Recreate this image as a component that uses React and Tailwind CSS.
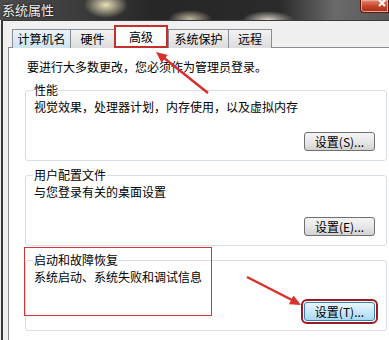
import React from "react";

const tabs = [
  { label: "计算机名", w: "w-[58px]", tone: "blue" },
  { label: "硬件", w: "w-[44px]" },
  { label: "高级", w: "w-[54px]", active: true },
  { label: "系统保护", w: "w-[60px]" },
  { label: "远程", w: "w-[44px]", last: true },
];

const groups = [
  {
    title: "性能",
    desc: "视觉效果，处理器计划，内存使用，以及虚拟内存",
    btn: "设置(S)...",
  },
  {
    title: "用户配置文件",
    desc: "与您登录有关的桌面设置",
    btn: "设置(E)...",
  },
  {
    title: "启动和故障恢复",
    desc: "系统启动、系统失败和调试信息",
    btn: "设置(T)...",
    focus: true,
  },
];

function TitleBar() {
  return (
    <div className="flex h-[20px] items-start bg-[radial-gradient(ellipse_22px_13px_at_106px_5px,#e9e2bb,transparent),radial-gradient(ellipse_22px_9px_at_190px_19px,#bdb79c,transparent),radial-gradient(ellipse_26px_9px_at_268px_20px,#d6d2c6,transparent),linear-gradient(90deg,#4d4d4d,#3a3a3a_22%,#262626_40%,#2b2b2b_72%,#6a6a6a_86%,#575757)]">
      <span className="pl-[2px] pt-[2px] text-[13px] leading-[15px] text-[#ececec] [text-shadow:0_0_3px_#000]">
        系统属性
      </span>
      <div className="ml-auto flex h-[13px] w-[29px] items-start justify-end rounded-bl-[4px] border border-t-0 border-[#5a1a10] bg-gradient-to-b from-[#e08a72] via-[#c7452c] to-[#a82a14] pr-[2px] shadow-[inset_0_0_0_1px_#e9a595]">
        <svg width="8" height="8" viewBox="0 0 8 8">
          <path d="M1 0 L7 6 M7 0 L1 6" stroke="#fff" strokeWidth="2" />
        </svg>
      </div>
    </div>
  );
}

function Tab({ t }) {
  if (t.active) {
    return (
      <div
        className={`relative z-10 flex h-[23px] ${t.w} items-center justify-center border border-b-0 border-[#898c95] bg-white text-[12px] outline-2 -outline-offset-2 outline-[#c4302b]`}
      >
        {t.label}
      </div>
    );
  }
  return (
    <div
      className={`flex h-[19px] ${t.w} items-center justify-center border-l border-t ${
        t.last ? "border-r" : ""
      } border-[#898c95] text-[12px] ${
        t.tone === "blue"
          ? "bg-gradient-to-b from-[#eaf3fa] to-[#cfe3f2]"
          : "bg-gradient-to-b from-[#f3f3f3] to-[#dcdcdc]"
      }`}
    >
      {t.label}
    </div>
  );
}

function Group({ g, first }) {
  return (
    <fieldset
      className={`${
        first ? "mt-[9px]" : "mt-[7px]"
      } w-[362px] rounded-[3px] border border-[#d5dfe5] pb-[9px] pl-[7px] pr-[8px]`}
    >
      <legend className="px-[1px] text-[12px] leading-[14px]">{g.title}</legend>
      <div className="mt-[3px] pl-[1px] text-[12px] leading-[14px]">{g.desc}</div>
      <div className="mt-[18px] flex justify-end pr-[3px]">
        <button
          className={`flex h-[19px] w-[71px] items-center justify-center rounded-[3px] border text-[12px] leading-none ${
            g.focus
              ? "border-[#3c7fb1] bg-gradient-to-b from-[#eaf6fd] via-[#c9e8f9] to-[#a7d9f5] outline-2 outline-offset-1 outline-[#9b1b22]"
              : "border-[#707070] bg-gradient-to-b from-[#f4f4f4] via-[#e8e8e8] to-[#d2d2d2]"
          }`}
        >
          {g.btn}
        </button>
      </div>
    </fieldset>
  );
}

export default function App() {
  return (
    <div className="relative h-[340px] w-[389px] overflow-hidden bg-[#f0f0f0] font-['Noto_Sans_CJK_SC','Liberation_Sans',sans-serif] text-black">
      <TitleBar />
      <div className="ml-[1px] h-[320px] border-l-2 border-t border-[#3a3a3a] pl-[5px] pt-[4px]">
        <div className="-mb-px ml-[4px] flex h-[23px] items-end">
          {tabs.map((t) => (
            <Tab key={t.label} t={t} />
          ))}
        </div>
        <div className="h-[300px] w-[400px] border border-[#898c95] bg-white pl-[16px] pt-[12px]">
          <div className="pl-[2px] text-[12px] leading-[14px]">
            要进行大多数更改，您必须作为管理员登录。
          </div>
          {groups.map((g, i) => (
            <Group key={g.title} g={g} first={i === 0} />
          ))}
        </div>
      </div>

      {/* annotation overlays */}
      <div className="pointer-events-none absolute left-[24px] top-[247px] h-[69px] w-[188px] border border-[#d0353a]" />
      <svg
        className="pointer-events-none absolute left-0 top-0"
        width="389"
        height="340"
        viewBox="0 0 389 340"
      >
        <line x1="208" y1="93" x2="164" y2="58" stroke="#d8302c" strokeWidth="2.5" />
        <polygon points="156,52 167.7,54.9 161.5,62.7" fill="#d8302c" />
        <line x1="247" y1="277" x2="292" y2="300" stroke="#d8302c" strokeWidth="2.5" />
        <polygon points="301,305 288.9,304.3 293.5,295.5" fill="#d8302c" />
      </svg>
    </div>
  );
}
